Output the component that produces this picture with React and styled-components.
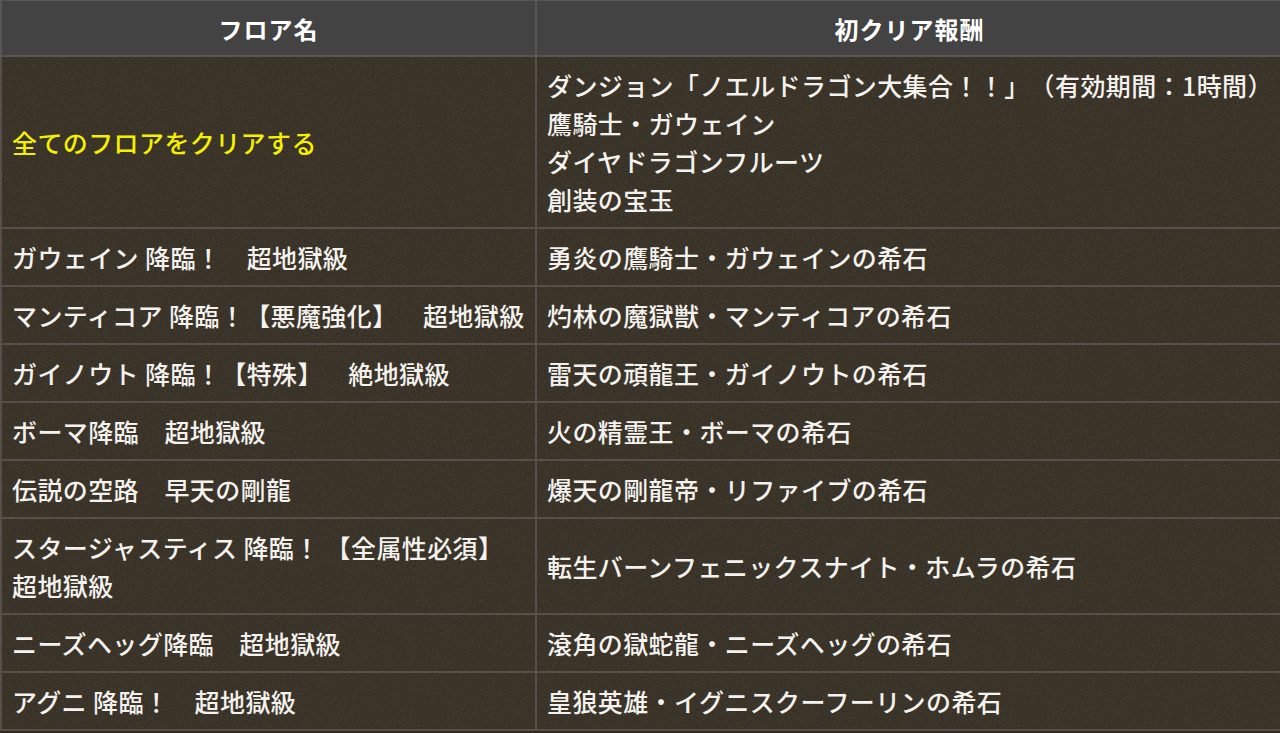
import React from "react";
import styled, { createGlobalStyle } from "styled-components";

const noise = encodeURIComponent(
  `<svg xmlns="http://www.w3.org/2000/svg" width="300" height="300"><filter id="n"><feTurbulence type="fractalNoise" baseFrequency="0.5" numOctaves="3" stitchTiles="stitch"/><feColorMatrix values="0 0 0 0 0.8  0 0 0 0 0.72  0 0 0 0 0.6  0 0 0 0.12 0"/></filter><rect width="300" height="300" filter="url(#n)"/></svg>`
);

const GlobalStyle = createGlobalStyle`
  html, body {
    margin: 0;
    padding: 0;
    overflow: hidden;
    background: #2f2921;
  }
`;

const Wrapper = styled.div`
  width: 1280px;
  overflow: hidden;
`;

const Table = styled.table`
  width: 1284px;
  border-collapse: collapse;
  table-layout: fixed;
  font-family: "Noto Sans CJK JP", "Noto Sans", sans-serif;
  background-color: #30291f;
  background-image: url("data:image/svg+xml,${noise}");
  color: #f4f2ee;
  text-spacing-trim: space-all;
`;

const HeadCell = styled.th`
  background: #434343;
  border: 2px solid #585552;
  border-top-width: 1px;
  height: 54px;
  padding: 0;
  font-size: 24px;
  font-weight: 700;
  color: #fff;
  text-align: center;
  vertical-align: middle;
  letter-spacing: 1px;
`;

const Cell = styled.td`
  border: 2px solid #57504a;
  padding: 9px 10px;
  font-size: 25px;
  font-weight: 500;
  letter-spacing: 0.4px;
  line-height: 38px;
  vertical-align: middle;
  white-space: nowrap;
  color: ${(p) => (p.$highlight ? "#f6f000" : "#f4f2ee")};
`;

const WrapCell = styled(Cell)`
  white-space: normal;
`;

const rows = [
  {
    floor: "ガウェイン 降臨！　超地獄級",
    reward: ["勇炎の鷹騎士・ガウェインの希石"],
  },
  {
    floor: "マンティコア 降臨！【悪魔強化】　超地獄級",
    reward: ["灼林の魔獄獣・マンティコアの希石"],
  },
  {
    floor: "ガイノウト 降臨！【特殊】　絶地獄級",
    reward: ["雷天の頑龍王・ガイノウトの希石"],
  },
  { floor: "ボーマ降臨　超地獄級", reward: ["火の精霊王・ボーマの希石"] },
  { floor: "伝説の空路　早天の剛龍", reward: ["爆天の剛龍帝・リファイブの希石"] },
  {
    floor: ["スタージャスティス 降臨！ 【全属性必須】", "超地獄級"],
    reward: ["転生バーンフェニックスナイト・ホムラの希石"],
  },
  { floor: "ニーズヘッグ降臨　超地獄級", reward: ["滾角の獄蛇龍・ニーズヘッグの希石"] },
  { floor: "アグニ 降臨！　超地獄級", reward: ["皇狼英雄・イグニスクーフーリンの希石"] },
];

const Lines = ({ items }) =>
  items.map((t, i) => (
    <React.Fragment key={i}>
      {i > 0 && <br />}
      {t}
    </React.Fragment>
  ));

export default function App() {
  return (
    <Wrapper>
      <GlobalStyle />
      <Table>
        <colgroup>
          <col style={{ width: 535 }} />
          <col />
        </colgroup>
        <thead>
          <tr>
            <HeadCell>フロア名</HeadCell>
            <HeadCell>初クリア報酬</HeadCell>
          </tr>
        </thead>
        <tbody>
          <tr>
            <Cell $highlight>全てのフロアをクリアする</Cell>
            <Cell>
              <Lines
                items={[
                  "ダンジョン「ノエルドラゴン大集合！！」（有効期間：1時間）",
                  "鷹騎士・ガウェイン",
                  "ダイヤドラゴンフルーツ",
                  "創装の宝玉",
                ]}
              />
            </Cell>
          </tr>
          {rows.map((r, i) => (
            <tr key={i}>
              <WrapCell>
                {Array.isArray(r.floor) ? <Lines items={r.floor} /> : r.floor}
              </WrapCell>
              <Cell>
                <Lines items={r.reward} />
              </Cell>
            </tr>
          ))}
        </tbody>
      </Table>
    </Wrapper>
  );
}
